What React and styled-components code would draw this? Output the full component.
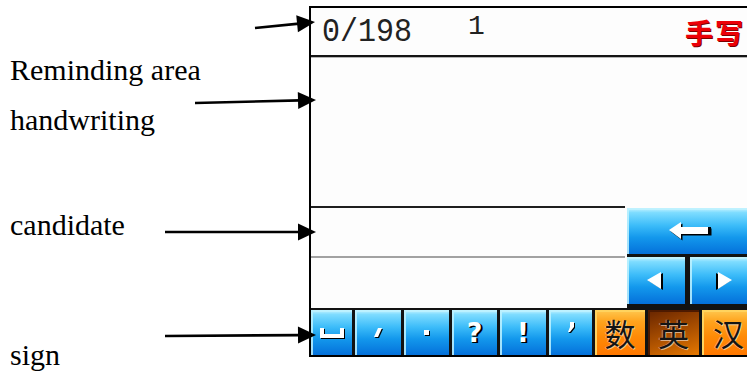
import React from "react";
import styled, { createGlobalStyle, css } from "styled-components";

const GlobalStyle = createGlobalStyle`
    html, body {
        margin: 0;
        padding: 0;
        background: #ffffff;
        overflow: hidden;
    }
`;

const Page = styled.div`
    display: flex;
    align-items: flex-start;
    width: 747px;
    height: 376px;
    overflow: hidden;
    background: #ffffff;
`;

const Notes = styled.div`
    position: relative;
    flex: 0 0 309px;
    height: 376px;
    box-sizing: border-box;
    padding-left: 10px;
    display: flex;
    flex-direction: column;
`;

const Label = styled.div`
    font-family: "Liberation Serif", "Times New Roman", serif;
    font-size: 30px;
    line-height: 34px;
    color: #000;
    white-space: nowrap;
    margin-top: ${({ $gap }) => $gap}px;
`;

const Pointers = styled.svg`
    position: absolute;
    left: 0;
    top: 0;
    overflow: visible;
    z-index: 2;
    pointer-events: none;
`;

const Frame = styled.div`
    flex: 0 0 448px;
    height: 351px;
    margin-top: 6px;
    box-sizing: border-box;
    border: 2px solid #000;
    background: #fdfdfd;
    display: flex;
    flex-direction: column;
`;

const Header = styled.div`
    height: 49px;
    box-sizing: border-box;
    border-bottom: 2px solid #141414;
    display: flex;
    align-items: center;
    padding: 0 10px 0 11px;
`;

const Count = styled.span`
    font-family: "Liberation Mono", "Courier New", monospace;
    font-size: 30px;
    color: #222;
    transform: scaleY(1.1);
`;

const PageNo = styled.span`
    font-family: "Liberation Mono", "Courier New", monospace;
    font-size: 28px;
    color: #222;
    margin-left: 56px;
    transform: translateY(-5px);
`;

const Mode = styled.span`
    margin-left: auto;
    font-family: "Noto Sans CJK SC", sans-serif;
    font-weight: 700;
    font-size: 28px;
    letter-spacing: 2px;
    color: #ec0008;
    text-shadow: 1px 1px 0 #7a0000;
`;

const HandArea = styled.div`
    height: 149px;
    box-sizing: border-box;
    border-top: 1px solid #b4b4b4;
`;

const Candidates = styled.div`
    height: 102px;
    display: flex;
`;

const CandList = styled.div`
    flex: 1;
    display: flex;
    flex-direction: column;
`;

const CandRow = styled.div`
    height: ${({ $h }) => $h}px;
    box-sizing: border-box;
    border-top: 2px solid ${({ $line }) => $line};
`;

const Side = styled.div`
    width: 128px;
    margin: 2px 0 0 2px;
    background: #121212;
    display: grid;
    grid-template-rows: 46px 47px;
    row-gap: 3px;
`;

const ArrowRow = styled.div`
    display: grid;
    grid-template-columns: 58px 1fr;
    column-gap: 5px;
`;

const Keys = styled.div`
    height: 47px;
    box-sizing: border-box;
    padding-top: 2px;
    background: #121212;
    display: flex;
    gap: 3px;
`;

const tones = {
    blue: css`
        background: linear-gradient(180deg, #c8f3ff 0%, #7edcff 10%, #3cbcf9 38%, #1398ec 64%, #0470da 100%);
        box-shadow: inset 2px 2px 0 rgba(190, 242, 255, 0.85);
    `,
    orange: css`
        background: linear-gradient(180deg, #ffc850 0%, #ffa41e 25%, #ff8a06 60%, #ff7800 100%);
        box-shadow: inset 2px 2px 0 #ffd35e;
    `,
    active: css`
        background: linear-gradient(160deg, #662400 0%, #934000 35%, #cc6600 80%, #e67800 100%);
        box-shadow: inset 2px 2px 0 #4e1a00;
    `,
};

const Key = styled.div`
    ${({ $w }) => ($w ? `flex: 0 0 ${$w}px;` : "flex: 1;")}
    display: flex;
    align-items: center;
    justify-content: center;
    ${({ $tone }) => tones[$tone || "blue"]}
`;

const Mark = styled.span`
    font-family: "DejaVu Sans", sans-serif;
    font-weight: 700;
    font-size: 27px;
    line-height: 1;
    color: #fff;
    text-shadow: 1px 1px 0 #000, 2px 1px 0 #000;
`;

const Hanzi = styled.span`
    font-family: "Noto Sans CJK SC", sans-serif;
    font-size: 31px;
    line-height: 1;
    color: #141414;
    text-shadow: 1px 1px 0 rgba(255, 255, 255, 0.55), -1px 0 0 rgba(255, 255, 255, 0.35);
`;

const pointers = [
    [255, 28, 315, 22],
    [195, 103, 316, 100],
    [165, 232, 316, 232],
    [165, 336, 316, 335],
];

const Pointer = ({ from, to }) => {
    const [x1, y1] = from;
    const [x2, y2] = to;
    const len = Math.hypot(x2 - x1, y2 - y1);
    const ux = (x2 - x1) / len;
    const uy = (y2 - y1) / len;
    const bx = x2 - ux * 18;
    const by = y2 - uy * 18;
    const px = -uy * 8.5;
    const py = ux * 8.5;
    return (
        <g>
            <line x1={x1} y1={y1} x2={bx + ux * 2} y2={by + uy * 2} stroke="#000" strokeWidth="2.6" />
            <polygon points={`${x2},${y2} ${bx + px},${by + py} ${bx - px},${by - py}`} fill="#000" />
        </g>
    );
};

const SpaceIcon = () => (
    <svg width="28" height="12" viewBox="0 0 28 12">
        <path d="M2 1h4v6h16V1h4v10H2z" fill="#000" transform="translate(1 1)" />
        <path d="M2 1h4v6h16V1h4v10H2z" fill="#fff" />
    </svg>
);

const CommaIcon = () => (
    <svg width="10" height="14" viewBox="0 0 10 14">
        <path d="M5 2h4l-4 9H1z" fill="#000" transform="translate(1 1)" />
        <path d="M5 2h4l-4 9H1z" fill="#fff" />
    </svg>
);

const DotIcon = () => (
    <svg width="8" height="8" viewBox="0 0 8 8">
        <rect x="2" y="2" width="5" height="5" fill="#000" />
        <rect x="1" y="1" width="5" height="5" fill="#fff" />
    </svg>
);

const QuoteIcon = () => (
    <svg width="10" height="14" viewBox="0 0 10 14" style={{ marginBottom: 10 }}>
        <path d="M4 1h4v5l-4 5H2l2-5z" fill="#000" transform="translate(1 1)" />
        <path d="M4 1h4v5l-4 5H2l2-5z" fill="#fff" />
    </svg>
);

const BackIcon = () => (
    <svg width="46" height="20" viewBox="0 0 46 20">
        <g transform="translate(1.5 1.5)" fill="#000">
            <path d="M1 9L13 1v5h29v7H13v5z" />
        </g>
        <path d="M1 9L13 1v5h29v7H13v5z" fill="#fff" />
        <rect x="40" y="6" width="3" height="7" fill="#000" />
    </svg>
);

const TriIcon = ({ right }) => (
    <svg width="22" height="22" viewBox="0 0 22 22" style={right ? { transform: "scaleX(-1)" } : undefined}>
        <path d="M2 10L16 2v17z" fill="#000" transform="translate(2 1)" />
        <path d="M2 10L16 2v17z" fill="#fff" />
    </svg>
);

const App = () => {
    return (
        <>
            <GlobalStyle />
            <Page>
                <Notes>
                    <Label $gap={53}>Reminding area</Label>
                    <Label $gap={16}>handwriting</Label>
                    <Label $gap={71}>candidate</Label>
                    <Label $gap={96}>sign</Label>
                    <Pointers width="320" height="376">
                        {pointers.map((p, index) => (
                            <Pointer key={index} from={[p[0], p[1]]} to={[p[2], p[3]]} />
                        ))}
                    </Pointers>
                </Notes>
                <Frame>
                    <Header>
                        <Count>0/198</Count>
                        <PageNo>1</PageNo>
                        <Mode>手写</Mode>
                    </Header>
                    <HandArea />
                    <Candidates>
                        <CandList>
                            <CandRow $h={50} $line="#1e1e1e" />
                            <CandRow $h={52} $line="#a2a2a2" />
                        </CandList>
                        <Side>
                            <Key><BackIcon /></Key>
                            <ArrowRow>
                                <Key><TriIcon /></Key>
                                <Key><TriIcon right /></Key>
                            </ArrowRow>
                        </Side>
                    </Candidates>
                    <Keys>
                        <Key $w={41}><SpaceIcon /></Key>
                        <Key $w={46}><CommaIcon /></Key>
                        <Key $w={45}><DotIcon /></Key>
                        <Key $w={45}><Mark>?</Mark></Key>
                        <Key $w={46}><Mark>!</Mark></Key>
                        <Key $w={43}><QuoteIcon /></Key>
                        <Key $w={50} $tone="orange"><Hanzi>数</Hanzi></Key>
                        <Key $w={51} $tone="active"><Hanzi>英</Hanzi></Key>
                        <Key $tone="orange"><Hanzi>汉</Hanzi></Key>
                    </Keys>
                </Frame>
            </Page>
        </>
    );
};

export default App;
